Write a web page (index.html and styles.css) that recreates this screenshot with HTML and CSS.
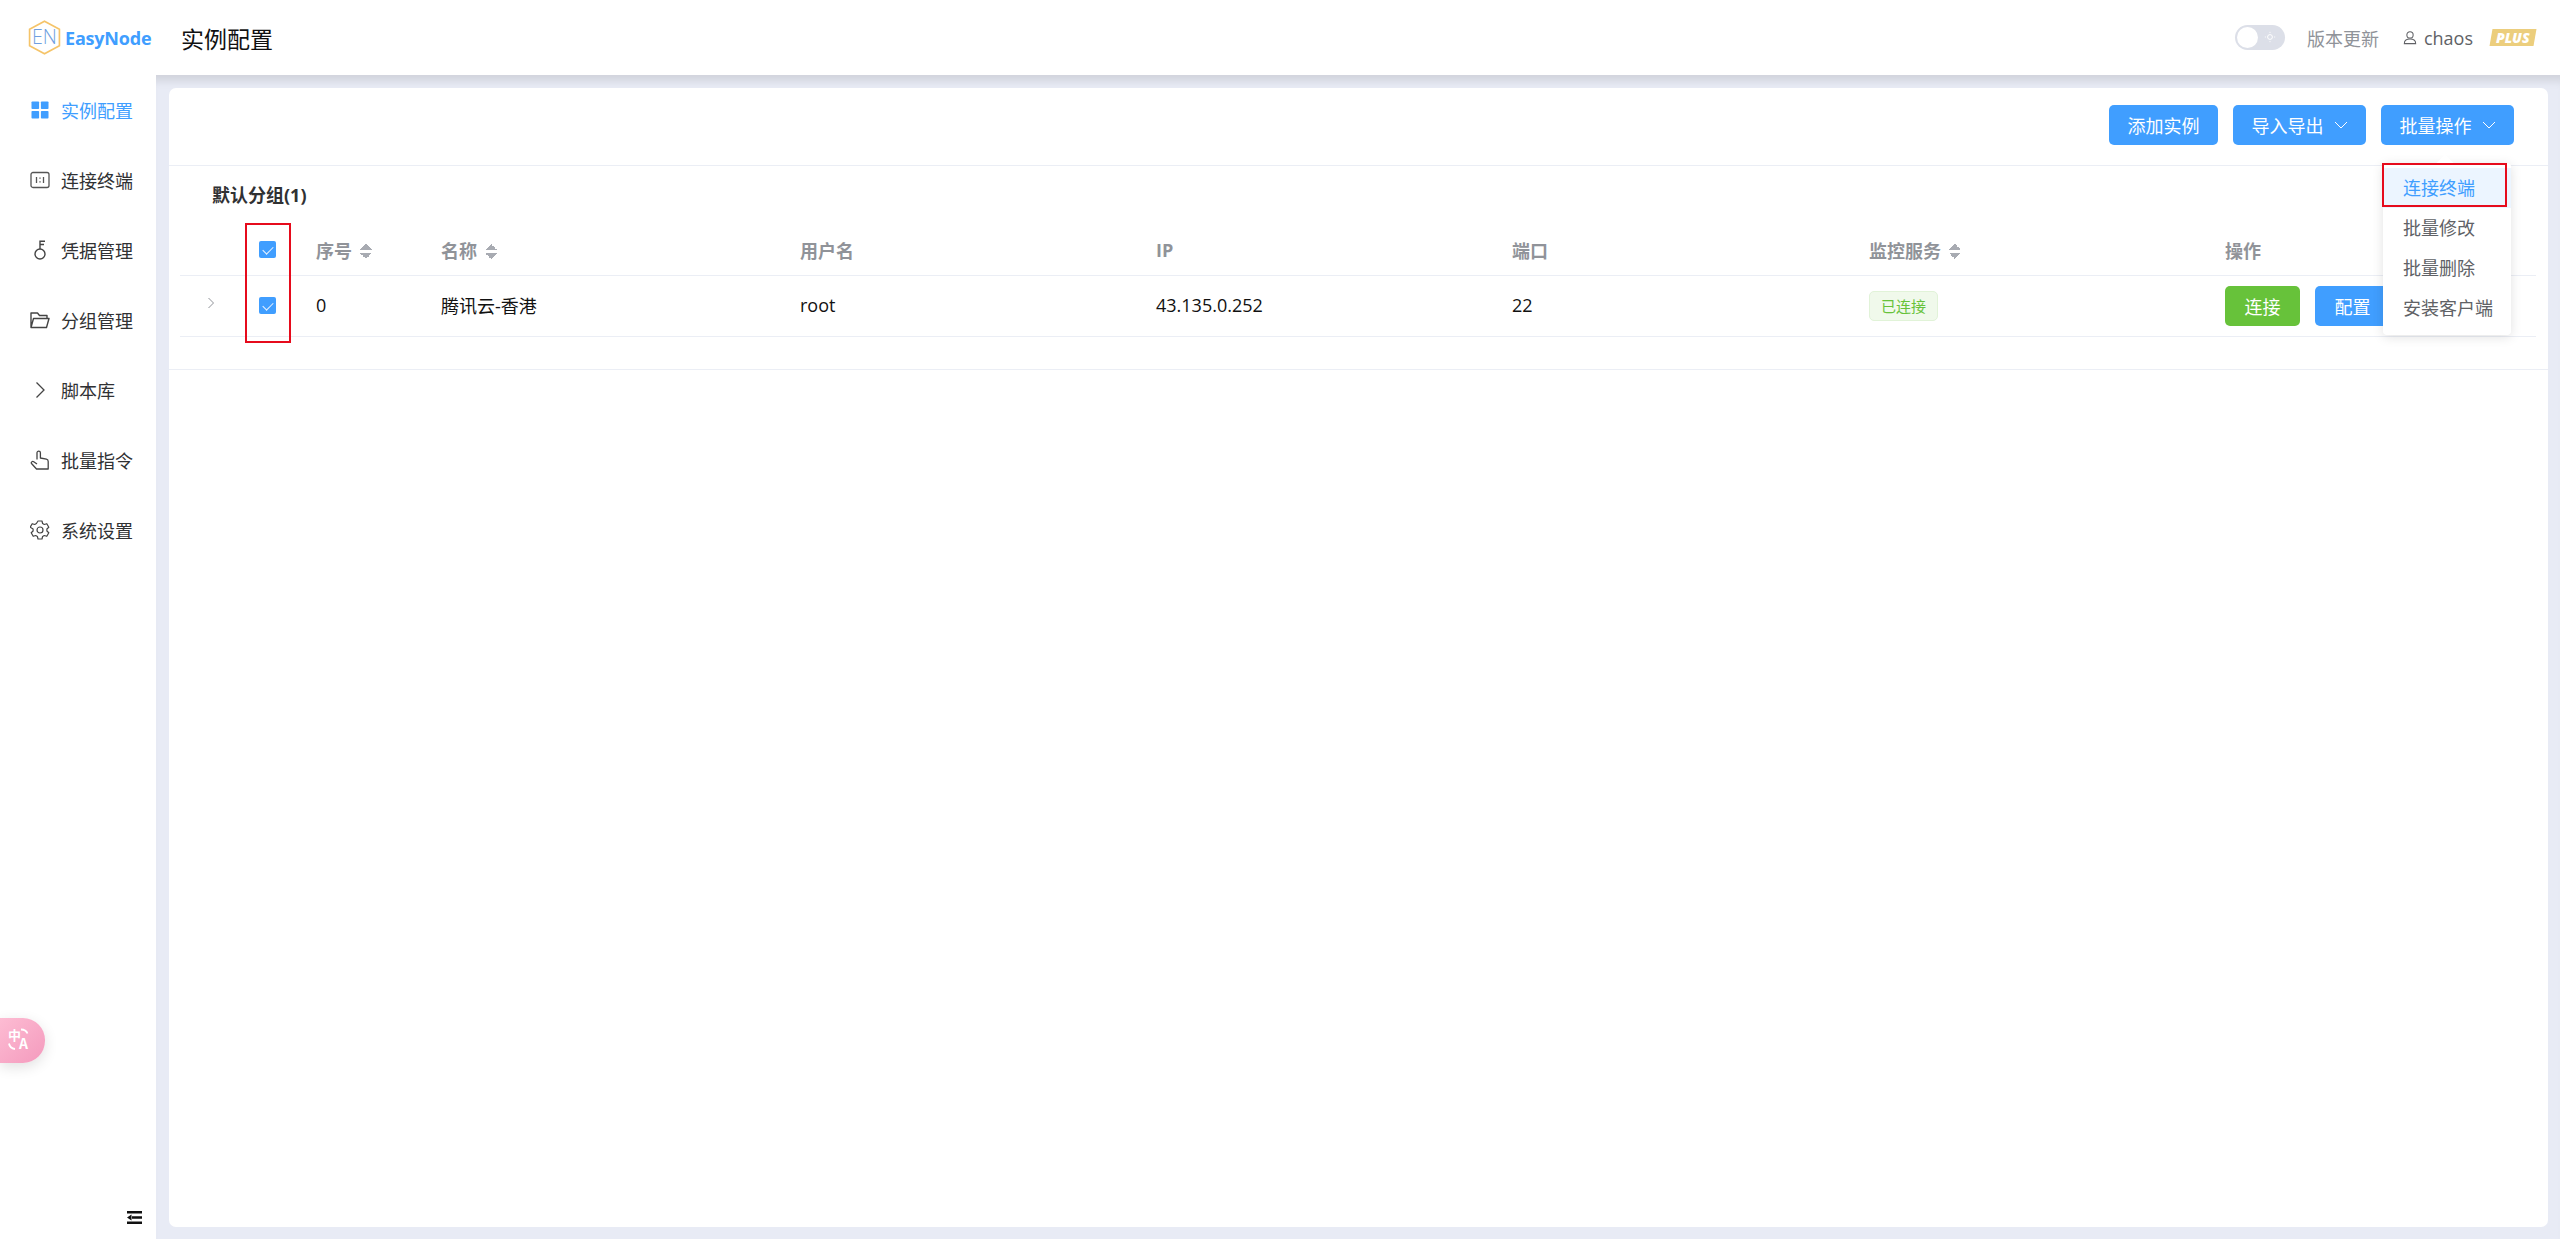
FILE: index.html
```html
<!DOCTYPE html>
<html lang="zh-CN">
<head>
<meta charset="utf-8">
<title>EasyNode</title>
<link rel="stylesheet" href="styles.css">
</head>
<body>
<header class="topbar">
  <div class="brand">
    <svg class="brand-hex" viewBox="0 0 32 34"><path d="M16 1.200 30.500 9v16L16 32.800 1.500 25V9z" fill="none" stroke="#f5c469" stroke-width="1.600"/><text x="16" y="23.500" text-anchor="middle" class="brand-en">EN</text></svg>
    <span class="brand-name">EasyNode</span>
  </div>
  <h1 class="page-title">实例配置</h1>
  <div class="top-right">
    <span class="theme-switch"><span class="theme-knob"></span><svg class="theme-sun" viewBox="0 0 12 12"><circle cx="6" cy="6" r="2.400" fill="none" stroke="#fff" stroke-width="1"/><path d="M6 .8v1.200M6 10v1.200M.8 6H2M10 6h1.200" stroke="#fff" stroke-width=".8"/></svg></span>
    <span class="update">版本更新</span>
    <span class="user">
      <svg class="user-icon" viewBox="0 0 16 16"><circle cx="8" cy="5" r="3.600" fill="none" stroke="#606266" stroke-width="1.200"/><path d="M1.500 15c0-3.400 2.600-5.200 6.500-5.200s6.500 1.800 6.500 5.200z" fill="none" stroke="#606266" stroke-width="1.200"/></svg>
      chaos
    </span>
    <span class="plus"><span class="plus-text">PLUS</span></span>
  </div>
</header>

<div class="shell">
  <aside class="sidebar">
    <nav class="nav">
      <a class="nav-item active"><svg class="nav-icon" viewBox="0 0 20 20"><g fill="#409eff"><rect x="1.500" y="1.500" width="7.600" height="7.600" rx=".8"/><rect x="10.900" y="1.500" width="7.600" height="7.600" rx=".8"/><rect x="1.500" y="10.900" width="7.600" height="7.600" rx=".8"/><rect x="10.900" y="10.900" width="7.600" height="7.600" rx=".8"/></g></svg>实例配置</a>
      <a class="nav-item"><svg class="nav-icon" viewBox="0 0 20 20"><rect x="1" y="2.500" width="18" height="15" rx="2" fill="none" stroke="#555" stroke-width="1.300"/><path d="M6.500 7v6M13.500 7v6M10 7.500v1.300M10 11.200v1.300" stroke="#555" stroke-width="1.300"/></svg>连接终端</a>
      <a class="nav-item"><svg class="nav-icon" viewBox="0 0 20 20"><circle cx="10" cy="14" r="5" fill="none" stroke="#444" stroke-width="1.400"/><path d="M10 9V1.200h5M10 4.500h4" fill="none" stroke="#444" stroke-width="1.400"/></svg>凭据管理</a>
      <a class="nav-item"><svg class="nav-icon" viewBox="0 0 20 20"><path d="M1 17.500V3h6.500l2 2.500H17v3M1 17.500h15.500L19 8.500H3.500z" fill="none" stroke="#444" stroke-width="1.400" stroke-linejoin="round"/></svg>分组管理</a>
      <a class="nav-item"><svg class="nav-icon" viewBox="0 0 20 20"><path d="M6.500 2.500 14 10l-7.500 7.500" fill="none" stroke="#444" stroke-width="1.300"/></svg>脚本库</a>
      <a class="nav-item"><svg class="nav-icon" viewBox="0 0 20 20"><path d="M7 9.500V2.800a1.700 1.700 0 0 1 3.400 0V8l6 1.200c1.200.3 1.800 1.200 1.800 2.300V19H6.500L1.500 13.500c-.8-1 .8-2.800 2.200-1.800L7 14" fill="none" stroke="#444" stroke-width="1.300" stroke-linejoin="round"/></svg>批量指令</a>
      <a class="nav-item"><svg class="nav-icon" viewBox="0 0 20 20"><path d="M8 1h4l.6 2.500 1.700 1 2.500-.8 2 3.500-1.900 1.800v2l1.900 1.800-2 3.500-2.500-.8-1.700 1L12 19H8l-.6-2.500-1.700-1-2.500.8-2-3.500 1.900-1.800v-2L.2 7.200l2-3.500 2.500.8 1.700-1z" fill="none" stroke="#444" stroke-width="1.200" stroke-linejoin="round"/><circle cx="10" cy="10" r="3" fill="none" stroke="#444" stroke-width="1.200"/></svg>系统设置</a>
    </nav>
    <button class="lang-pill" type="button">
      <span class="lang-a">中</span><span class="lang-b">A</span>
      <svg class="lang-arcs" viewBox="0 0 45 45"><path d="M21 11.500c3 0 5.500 1.500 6.500 4M9 25.500c.5 3 2.500 5 6 5.500" fill="none" stroke="#fff" stroke-width="1.800"/></svg>
    </button>
    <svg class="fold" viewBox="0 0 15 13"><path d="M0 0h15v2.400H0zM0 10.600h15V13H0zM5 5.300h10v2.400H5zM4.500 3.500v6L0 6.500z" fill="#111"/></svg>
  </aside>

  <main class="main">
    <section class="card">
      <div class="toolbar">
        <button class="btn primary" type="button">添加实例</button>
        <button class="btn primary" type="button">导入导出<svg class="btn-caret" viewBox="0 0 14 8"><path d="M1 1l6 6 6-6" fill="none" stroke="#fff" stroke-width="1"/></svg></button>
        <button class="btn primary" type="button">批量操作<svg class="btn-caret" viewBox="0 0 14 8"><path d="M1 1l6 6 6-6" fill="none" stroke="#fff" stroke-width="1"/></svg></button>
      </div>

      <div class="group">
        <div class="group-title">默认分组(1)</div>
        <table class="table">
          <colgroup>
            <col class="c-expand"><col class="c-check"><col class="c-index"><col class="c-name"><col class="c-std"><col class="c-std"><col class="c-port"><col class="c-std"><col class="c-ops">
          </colgroup>
          <thead>
            <tr>
              <th></th>
              <th class="center"><span class="checkbox"></span></th>
              <th>序号<span class="sort"></span></th>
              <th>名称<span class="sort"></span></th>
              <th>用户名</th>
              <th>IP</th>
              <th>端口</th>
              <th>监控服务<span class="sort"></span></th>
              <th>操作</th>
            </tr>
          </thead>
          <tbody>
            <tr>
              <td class="expand-cell"><svg class="expand" viewBox="0 0 8 12"><path d="M1.500 1l5 5-5 5" fill="none" stroke="#909399" stroke-width="1"/></svg></td>
              <td class="center"><span class="checkbox"></span></td>
              <td class="cell-text">0</td>
              <td class="cell-text">腾讯云-香港</td>
              <td class="cell-text">root</td>
              <td class="cell-text">43.135.0.252</td>
              <td class="cell-text">22</td>
              <td><span class="tag">已连接</span></td>
              <td class="ops"><button class="btn success" type="button">连接</button><button class="btn primary" type="button">配置</button></td>
            </tr>
          </tbody>
        </table>
      </div>
    </section>
  </main>
</div>

<div class="mark mark-table"></div>

<div class="dropdown">
  <span class="dropdown-arrow"></span>
  <div class="dropdown-item hover">连接终端</div>
  <div class="dropdown-item">批量修改</div>
  <div class="dropdown-item">批量删除</div>
  <div class="dropdown-item">安装客户端</div>
</div>
<div class="mark mark-menu"></div>
</body>
</html>
```

FILE: styles.css
```css
* { box-sizing: border-box; }
html, body { height: 100%; }
body {
  margin: 0;
  height: 1239px;
  overflow: hidden;
  background: #fff;
  color: #303133;
  font-family: "Open Sans", "Noto Sans CJK SC", sans-serif;
  font-size: 18px;
  display: flex;
  flex-direction: column;
  position: relative;
}

/* top bar */
.topbar {
  height: 75px;
  flex: none;
  display: flex;
  align-items: center;
  background: #fff;
  position: relative;
  z-index: 2;
}
.brand {
  width: 181px;
  flex: none;
  display: flex;
  align-items: center;
  padding-left: 28px;
  gap: 4px;
}
.brand-hex { width: 33px; height: 35px; flex: none; }
.brand-en { font-size: 19px; font-weight: 300; fill: #6f9fe0; font-family: "Open Sans", sans-serif; }
.brand-name { font-size: 18px; font-weight: 700; letter-spacing: -.2px; color: #409eff; white-space: nowrap; }
.page-title { margin: 0; font-size: 23px; font-weight: 400; color: #111; }
.top-right {
  margin-left: auto;
  display: flex;
  align-items: center;
  padding-right: 25px;
}
.theme-switch {
  width: 50px;
  height: 25px;
  border-radius: 13px;
  background: #dcdfe8;
  position: relative;
  display: block;
}
.theme-knob {
  position: absolute;
  left: 2px;
  top: 2px;
  width: 21px;
  height: 21px;
  border-radius: 50%;
  background: #fff;
}
.theme-sun { position: absolute; right: 9px; top: 6px; width: 12px; height: 12px; }
.update { margin-left: 22px; color: #909399; }
.user {
  margin-left: 24px;
  color: #606266;
  display: flex;
  align-items: center;
  gap: 7px;
}
.user-icon { width: 14px; height: 15px; }
.plus {
  margin-left: 18px;
  width: 44px;
  height: 17px;
  background: #ecce7d;
  transform: skewX(-10deg);
  display: flex;
  align-items: center;
  justify-content: center;
}
.plus-text { color: #fff; font-size: 14px; font-weight: 800; font-style: italic; transform: skewX(10deg); }

/* shell */
.shell { flex: 1; display: flex; min-height: 0; }
.sidebar {
  width: 156px;
  flex: none;
  background: #fff;
  position: relative;
}
.nav { display: flex; flex-direction: column; }
.nav-item {
  height: 70px;
  display: flex;
  align-items: center;
  padding-left: 30px;
  gap: 11px;
  color: #303133;
}
.nav-item.active { color: #409eff; }
.nav-icon { width: 20px; height: 20px; flex: none; }
.lang-pill {
  position: absolute;
  left: 0;
  top: 943px;
  width: 45px;
  height: 45px;
  border: 0;
  padding: 0;
  border-radius: 0 22px 22px 0;
  background: linear-gradient(135deg, #fdbcd3, #f49abd);
  box-shadow: 0 4px 14px rgba(0, 0, 0, .12);
  color: #fff;
  font-family: "Noto Sans CJK SC", sans-serif;
  font-weight: 700;
}
.lang-a { position: absolute; left: 8px; top: 10px; font-size: 13px; line-height: 14px; }
.lang-b { position: absolute; left: 19px; top: 18px; font-size: 14px; line-height: 14px; }
.lang-arcs { position: absolute; left: 0; top: 0; width: 45px; height: 45px; }
.fold { position: absolute; left: 127px; top: 1136px; width: 15px; height: 13px; }

/* main */
.main {
  flex: 1;
  min-width: 0;
  background: #e8ebf5;
  padding: 13px 12px 12px 13px;
  box-shadow: inset 0 12px 8px -6px rgba(0, 0, 0, .1);
}
.card {
  height: 100%;
  background: #fff;
  border-radius: 7px;
}
.toolbar {
  height: 78px;
  border-bottom: 1px solid #ebeef5;
  display: flex;
  justify-content: flex-end;
  align-items: center;
  gap: 15px;
  padding: 0 34px 3px 0;
}
.btn {
  height: 40px;
  border: 0;
  border-radius: 5px;
  padding: 0 18.5px;
  color: #fff;
  font: inherit;
  display: inline-flex;
  align-items: center;
  white-space: nowrap;
}
.btn.primary { background: #409eff; }
.btn.success { background: #67c23a; }
.btn-caret { width: 14px; height: 8px; margin-left: 10px; }

/* group + table */
.group {
  padding: 0 12px 32px 11px;
  border-bottom: 1px solid #ebeef5;
}
.group-title {
  height: 57px;
  padding: 17px 0 0 32px;
  font-weight: 700;
  line-height: 24px;
  color: #303133;
}
.table {
  width: 2356px;
  table-layout: fixed;
  border-collapse: collapse;
}
.c-expand { width: 64px; }
.c-check { width: 46px; }
.c-index { width: 151px; }
.c-name { width: 359px; }
.c-std { width: 356px; }
.c-port { width: 357px; }
.c-ops { width: 311px; }
.table th {
  height: 52px;
  padding: 2px 0 0 26px;
  border-bottom: 1px solid #ebeef5;
  text-align: left;
  color: #909399;
  font-weight: 700;
  white-space: nowrap;
}
.table td {
  height: 61px;
  padding: 0 0 0 26px;
  border-bottom: 1px solid #ebeef5;
  color: #111;
  white-space: nowrap;
}
.table th:nth-child(n+4), .table td:nth-child(n+4) { padding-left: 0; }
.table th.center, .table td.center { padding-left: 0; padding-right: 0; }
.table td.cell-text { padding-bottom: 2px; }
.table td.expand-cell { padding: 0 0 6px 27px; }
.expand { width: 8px; height: 12px; display: block; }
.checkbox {
  display: block;
  width: 17px;
  height: 17px;
  margin: 0 auto;
  border-radius: 2px;
  background: #409eff;
  position: relative;
}
.checkbox::after {
  content: "";
  position: absolute;
  left: 6px;
  top: 3px;
  width: 5px;
  height: 9px;
  border: solid #e8f2ff;
  border-width: 0 1px 1px 0;
  transform: rotate(45deg);
}
.sort {
  display: inline-block;
  width: 12px;
  height: 15px;
  margin-left: 8px;
  vertical-align: -1px;
  background:
    linear-gradient(to bottom right, transparent 50%, #a8abb2 50%) 0 0 / 6px 6px no-repeat,
    linear-gradient(to bottom left, transparent 50%, #a8abb2 50%) 6px 0 / 6px 6px no-repeat,
    linear-gradient(to top right, transparent 50%, #a8abb2 50%) 0 9px / 6px 6px no-repeat,
    linear-gradient(to top left, transparent 50%, #a8abb2 50%) 6px 9px / 6px 6px no-repeat;
}
.tag {
  display: inline-flex;
  align-items: center;
  justify-content: center;
  width: 69px;
  height: 30px;
  border: 1px solid #e1f3d8;
  border-radius: 5px;
  background: #f0f9eb;
  color: #67c23a;
  font-size: 15px;
}
.ops .btn { margin-right: 15px; padding: 0 19.5px; }

/* menu overlay */
.dropdown {
  position: absolute;
  left: 2383px;
  top: 163px;
  width: 128px;
  height: 172px;
  padding-top: 5px;
  background: #fff;
  border-radius: 4px;
  box-shadow: 0 2px 12px rgba(0, 0, 0, .12);
  z-index: 3;
  color: #606266;
}
.dropdown-arrow {
  position: absolute;
  left: 56px;
  top: -6px;
  width: 12px;
  height: 12px;
  background: #fff;
  transform: rotate(45deg);
}
.dropdown-item {
  position: relative;
  height: 40px;
  line-height: 40px;
  padding-left: 20px;
  white-space: nowrap;
}
.dropdown-item.hover { background: #ecf5ff; color: #409eff; }

/* red annotations */
.mark {
  position: absolute;
  border: 2px solid #e60b1c;
  z-index: 4;
  pointer-events: none;
}
.mark-table { left: 245px; top: 223px; width: 46px; height: 120px; }
.mark-menu { left: 2382px; top: 163px; width: 125px; height: 44px; }
```
